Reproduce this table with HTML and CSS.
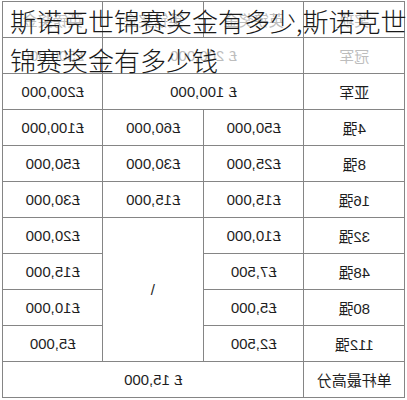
FILE: index.html
```html
<!DOCTYPE html>
<html lang="zh-CN">
<head>
<meta charset="utf-8">
<title>斯诺克世锦赛奖金</title>
<link rel="stylesheet" href="styles.css">
</head>
<body>
<div class="page">
  <table class="prize">
    <tr class="faded"><th>奖项</th><th>英镑奖金</th><th>英镑奖金</th><th>英镑奖金</th></tr>
    <tr class="faded"><td>冠军</td><td colspan="2">£ 200,000</td><td>£500,000</td></tr>
    <tr><td>亚军</td><td colspan="2">£ 100,000</td><td>£200,000</td></tr>
    <tr><td>4强</td><td>£50,000</td><td>£60,000</td><td>£100,000</td></tr>
    <tr><td>8强</td><td>£25,000</td><td>£30,000</td><td>£50,000</td></tr>
    <tr><td>16强</td><td>£15,000</td><td>£15,000</td><td>£30,000</td></tr>
    <tr><td>32强</td><td>£10,000</td><td rowspan="4"><span class="unflip">/</span></td><td>£20,000</td></tr>
    <tr><td>48强</td><td>£7,500</td><td>£15,000</td></tr>
    <tr><td>80强</td><td>£5,000</td><td>£10,000</td></tr>
    <tr><td>112强</td><td>£2,500</td><td>£5,000</td></tr>
    <tr><td>单杆最高分</td><td colspan="3">£ 15,000</td></tr>
  </table>
  <h1 class="title">斯诺克世锦赛奖金有多少,斯诺克世<br>锦赛奖金有多少钱</h1>
</div>
</body>
</html>
```
FILE: styles.css
```css
html, body {
  margin: 0;
  background: #ffffff;
}

.page {
  position: relative;
  padding: 1px 2px 0 2px;
  font-family: "Liberation Sans", "Noto Sans CJK SC", sans-serif;
}

.prize {
  width: 403px;
  border-collapse: collapse;
  table-layout: fixed;
  transform: scaleX(-1);
  font-size: 15px;
  color: #1e1e1e;
}

.prize tr {
  height: 36px;
}

.prize th,
.prize td {
  border: 1px solid #858585;
  padding: 0;
  text-align: center;
  vertical-align: middle;
  font-weight: normal;
}

.prize .faded {
  color: #bdbdbd;
}

.unflip {
  display: inline-block;
  transform: scaleX(-1);
}

.title {
  position: absolute;
  top: 1px;
  left: 10px;
  margin: 0;
  font-family: "Noto Sans CJK SC", sans-serif;
  font-size: 26px;
  line-height: 39px;
  font-weight: 300;
  color: #1a1a1a;
  white-space: nowrap;
}
```
